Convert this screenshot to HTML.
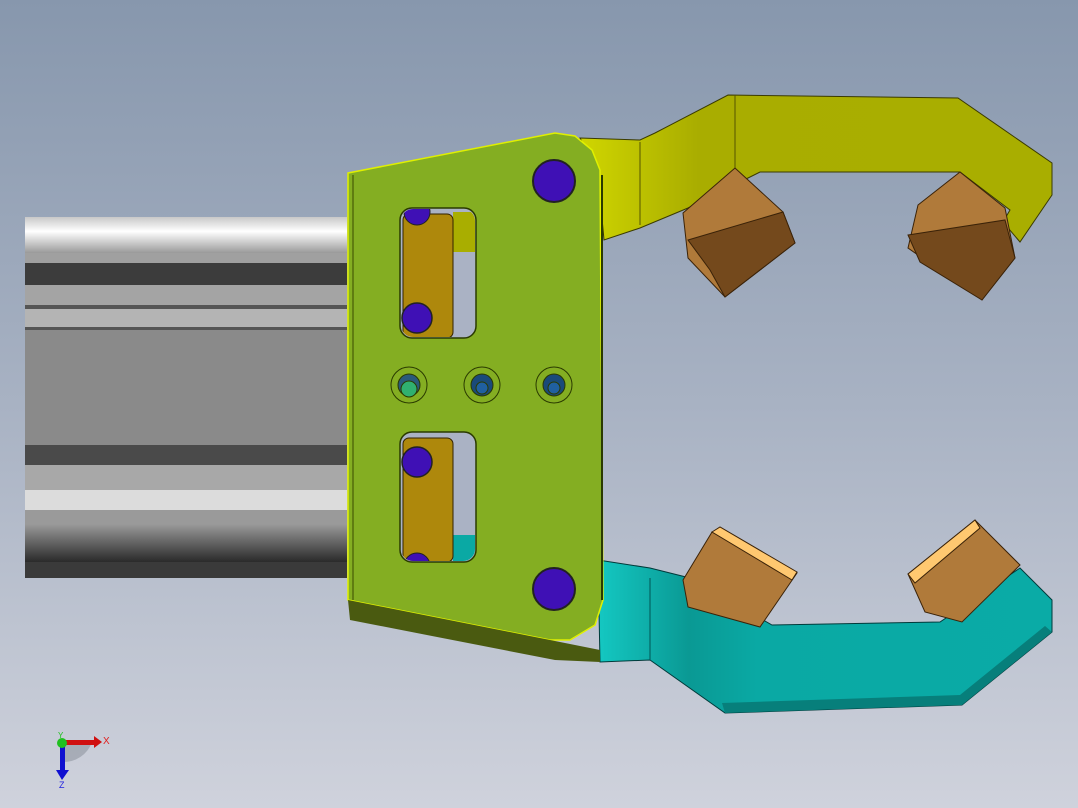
<!DOCTYPE html>
<html><head><meta charset="utf-8"><style>
html,body{margin:0;padding:0;width:1078px;height:808px;overflow:hidden}
svg{display:block}
</style></head><body>
<svg width="1078" height="808" viewBox="0 0 1078 808" xmlns="http://www.w3.org/2000/svg" font-family="Liberation Sans, sans-serif">
<defs>
<linearGradient id="bg" x1="0" y1="0" x2="0" y2="1">
<stop offset="0" stop-color="#8797ad"/><stop offset="0.5" stop-color="#a8b2c3"/><stop offset="1" stop-color="#cfd2dc"/></linearGradient>
<linearGradient id="top" x1="0" y1="0" x2="0" y2="1"><stop offset="0" stop-color="#c8c8c8"/><stop offset="0.4" stop-color="#ffffff"/><stop offset="1" stop-color="#9a9a9a"/></linearGradient>
<linearGradient id="bot" x1="0" y1="0" x2="0" y2="1"><stop offset="0" stop-color="#9a9a9a"/><stop offset="1" stop-color="#2a2a2a"/></linearGradient>
<linearGradient id="yel" x1="0" y1="0" x2="1" y2="0"><stop offset="0" stop-color="#d0d600"/><stop offset="0.25" stop-color="#a9ad00"/><stop offset="1" stop-color="#a9ae00"/></linearGradient>
<linearGradient id="cy" x1="0" y1="0" x2="1" y2="0"><stop offset="0" stop-color="#14c8c2"/><stop offset="0.2" stop-color="#0a9994"/><stop offset="0.35" stop-color="#0aa9a4"/><stop offset="1" stop-color="#0aaba6"/></linearGradient>
<clipPath id="s1"><rect x="401" y="209" width="74" height="128" rx="12"/></clipPath>
<clipPath id="s2"><rect x="401" y="433" width="74" height="128" rx="12"/></clipPath>
</defs>
<rect width="1078" height="808" fill="url(#bg)"/>
<g>
<rect x="25" y="217" width="322" height="361" fill="#8c8c8c"/>
<rect x="25" y="217" width="322" height="36" fill="url(#top)"/>
<rect x="25" y="253" width="322" height="10" fill="#a0a0a0"/>
<rect x="25" y="263" width="322" height="22" fill="#3c3c3c"/>
<rect x="25" y="285" width="322" height="20" fill="#a4a4a4"/>
<rect x="25" y="305" width="322" height="4" fill="#555"/>
<rect x="25" y="309" width="322" height="18" fill="#b4b4b4"/>
<rect x="25" y="327" width="322" height="3" fill="#555"/>
<rect x="25" y="330" width="322" height="115" fill="#8a8a8a"/>
<rect x="25" y="445" width="322" height="20" fill="#4a4a4a"/>
<rect x="25" y="465" width="322" height="25" fill="#a8a8a8"/>
<rect x="25" y="490" width="322" height="20" fill="#dcdcdc"/>
<rect x="25" y="510" width="322" height="14" fill="#9a9a9a"/>
<rect x="25" y="524" width="322" height="38" fill="url(#bot)"/>
<rect x="25" y="562" width="322" height="16" fill="#3a3a3a"/>
</g>
<polygon points="580,138 640,140 655,133 728,95 958,98 1052,163 1052,195 1020,242 1003,222 1010,210 960,172 760,172 688,208 640,228 604,240 598,175" fill="url(#yel)" stroke="#3a3a00" stroke-width="1"/>
<line x1="735" y1="95" x2="735" y2="168" stroke="#555500" stroke-width="1"/>
<line x1="640" y1="142" x2="640" y2="225" stroke="#555500" stroke-width="1"/>
<polygon points="598,560 650,568 690,578 772,625 940,622 1020,568 1052,600 1052,632 962,705 725,713 650,660 600,662" fill="url(#cy)" stroke="#003a3a" stroke-width="1"/>
<polygon points="1052,632 962,705 725,713 722,703 960,695 1045,626" fill="#077f7b"/>
<line x1="650" y1="578" x2="650" y2="660" stroke="#055" stroke-width="1"/>
<g stroke="#3a2208" stroke-width="1">
<polygon points="683,213 735,168 783,212 795,243 725,297 688,258" fill="#b07a3a"/>
<polygon points="688,240 783,212 795,243 725,297 710,270" fill="#74491c"/>
<polygon points="918,205 960,172 1005,208 1015,258 982,300 908,248" fill="#b07a3a"/>
<polygon points="908,235 1005,220 1015,258 982,300 920,262" fill="#74491c"/>
<polygon points="683,580 712,532 797,573 760,627 688,607" fill="#b07a3a"/>
<polygon points="712,532 720,527 797,572 792,580" fill="#ffc870"/>
<polygon points="908,574 975,520 1020,565 962,622 925,612" fill="#b07a3a"/>
<polygon points="908,574 975,520 980,528 915,583" fill="#ffc870"/>
</g>
<polygon points="348,173 555,133 575,136 592,150 600,170 603,600 595,625 570,640 550,640 348,600" fill="#84ae22" stroke="#e0f000" stroke-width="1.5"/>
<polygon points="348,600 550,640 600,650 600,662 555,660 350,620" fill="#4a5a10"/>
<line x1="353" y1="175" x2="353" y2="600" stroke="#3a4a00" stroke-width="1"/>
<line x1="602" y1="175" x2="602" y2="600" stroke="#2a3a00" stroke-width="2"/>
<g>
<rect x="400" y="208" width="76" height="130" rx="12" fill="#aab2c4" stroke="#2a3a00" stroke-width="1.5"/>
<g clip-path="url(#s1)">
<rect x="453" y="212" width="22" height="40" fill="#a9ae00"/>
<rect x="403" y="214" width="50" height="124" rx="6" fill="#ae880c" stroke="#332200"/>
<circle cx="417" cy="212" r="13" fill="#3f10b5" stroke="#222"/>
<circle cx="417" cy="318" r="15" fill="#3f10b5" stroke="#222" stroke-width="1.5"/>
</g>
<rect x="400" y="432" width="76" height="130" rx="12" fill="#aab2c4" stroke="#2a3a00" stroke-width="1.5"/>
<g clip-path="url(#s2)">
<rect x="453" y="535" width="22" height="27" fill="#0aa9a4"/>
<rect x="403" y="438" width="50" height="124" rx="6" fill="#ae880c" stroke="#332200"/>
<circle cx="417" cy="462" r="15" fill="#3f10b5" stroke="#222" stroke-width="1.5"/>
<circle cx="417" cy="566" r="13" fill="#3f10b5" stroke="#222"/>
</g>
</g>
<circle cx="554" cy="181" r="21" fill="#3f10b5" stroke="#222" stroke-width="2"/>
<circle cx="554" cy="589" r="21" fill="#3f10b5" stroke="#222" stroke-width="2"/>
<g stroke="#2a3a00" stroke-width="1">
<circle cx="409" cy="385" r="18" fill="#84ae22"/><circle cx="409" cy="385" r="11" fill="#2a5a7a"/><circle cx="409" cy="389" r="8" fill="#30b070"/>
<circle cx="482" cy="385" r="18" fill="#84ae22"/><circle cx="482" cy="385" r="11" fill="#1a4a7a"/><circle cx="482" cy="388" r="6" fill="#2060a0"/>
<circle cx="554" cy="385" r="18" fill="#84ae22"/><circle cx="554" cy="385" r="11" fill="#1a4a7a"/><circle cx="554" cy="388" r="6" fill="#2060a0"/>
</g>
<g>
<path d="M62 762 A30 30 0 0 0 92 742 L62 742 Z" fill="#9096a0" opacity="0.6"/>
<rect x="62" y="740" width="34" height="5" fill="#d01010"/>
<polygon points="94,736 102,742 94,748" fill="#d01010"/>
<rect x="60" y="742" width="5" height="30" fill="#1010d0"/>
<polygon points="56,770 69,770 62,780" fill="#1010d0"/>
<circle cx="62" cy="743" r="5" fill="#20c020"/>
<text x="103" y="744" font-size="10" fill="#e02020">X</text>
<text x="59" y="788" font-size="9" fill="#2020e0">Z</text>
<text x="58" y="738" font-size="8" fill="#20c020">Y</text>
</g>
</svg>
</body></html>
